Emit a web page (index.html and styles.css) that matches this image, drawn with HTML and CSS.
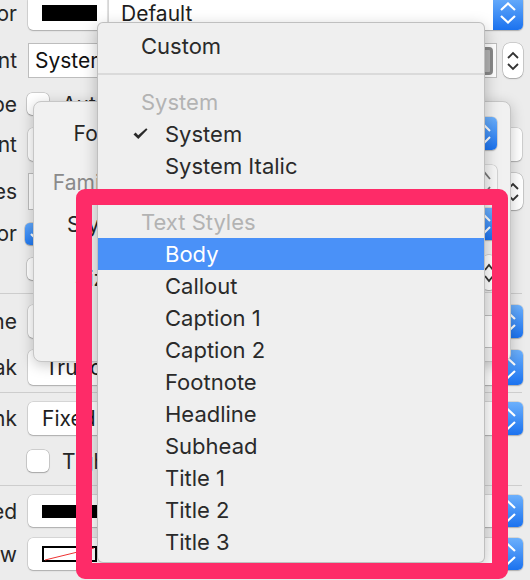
FILE: index.html
```html
<!DOCTYPE html>
<html>
<head>
<meta charset="utf-8">
<link rel="stylesheet" href="styles.css">
</head>
<body>
<div class="inspector">
  <div class="row r1">
    <div class="label"><span>Color</span></div>
    <div class="ctrl">
      <div class="well"><span class="swatch black"></span></div>
      <div class="popup joined"><span class="ptext">Default</span><span class="barrows"><svg width="16" height="22" viewBox="0 0 16 22"><path d="M1 8 L8 1.5 L15 8 M1 14 L8 20.5 L15 14" fill="none" stroke="#fff" stroke-width="2.2"/></svg></span></div>
    </div>
  </div>
  <div class="row r2">
    <div class="label"><span>Font</span></div>
    <div class="ctrl">
      <div class="field"><span class="ftext">System 17.0</span><span class="fontbtn"></span></div>
      <div class="stepper"><svg width="12" height="22" viewBox="0 0 12 22"><path d="M1 8 L6 3 L11 8 M1 14 L6 19 L11 14" fill="none" stroke="#333" stroke-width="1.8"/></svg></div>
    </div>
  </div>
  <div class="row r3">
    <div class="label"><span>Dynamic Type</span></div>
    <div class="ctrl">
      <span class="cb"></span><span class="cbtext">Automatically Adjusts Font</span>
    </div>
  </div>
  <div class="row r4">
    <div class="label"><span>Alignment</span></div>
    <div class="ctrl"><div class="seg"></div></div>
  </div>
  <div class="row r5">
    <div class="label"><span>Lines</span></div>
    <div class="ctrl">
      <div class="field"><span class="ftext">1</span></div>
      <div class="stepper"><svg width="12" height="22" viewBox="0 0 12 22"><path d="M1 8 L6 3 L11 8 M1 14 L6 19 L11 14" fill="none" stroke="#333" stroke-width="1.8"/></svg></div>
    </div>
  </div>
  <div class="row r6">
    <div class="label"><span>Behavior</span></div>
    <div class="ctrl">
      <span class="cb on"><svg width="14" height="12" viewBox="0 0 14 12"><path d="M2 6 L5.5 9.5 L12 2" fill="none" stroke="#fff" stroke-width="2.2"/></svg></span><span class="cbtext">Enabled</span>
    </div>
  </div>
  <div class="row r7">
    <div class="label"><span></span></div>
    <div class="ctrl">
      <span class="cb"></span><span class="cbtext">Highlighted</span>
    </div>
  </div>
  <div class="sep s1"></div>
  <div class="row r8">
    <div class="label"><span>Baseline</span></div>
    <div class="ctrl">
      <div class="popup"><span class="ptext">Align Baselines</span><span class="barrows"><svg width="16" height="22" viewBox="0 0 16 22"><path d="M1 8 L8 1.5 L15 8 M1 14 L8 20.5 L15 14" fill="none" stroke="#fff" stroke-width="2.2"/></svg></span></div>
    </div>
  </div>
  <div class="row r9">
    <div class="label"><span>Line Break</span></div>
    <div class="ctrl">
      <div class="popup"><span class="ptext tight">Truncate Tail</span><span class="barrows"><svg width="16" height="22" viewBox="0 0 16 22"><path d="M1 8 L8 1.5 L15 8 M1 14 L8 20.5 L15 14" fill="none" stroke="#fff" stroke-width="2.2"/></svg></span></div>
    </div>
  </div>
  <div class="sep s2"></div>
  <div class="row r10">
    <div class="label"><span>Autoshrink</span></div>
    <div class="ctrl">
      <div class="popup"><span class="ptext">Fixed Font Size</span><span class="barrows"><svg width="16" height="22" viewBox="0 0 16 22"><path d="M1 8 L8 1.5 L15 8 M1 14 L8 20.5 L15 14" fill="none" stroke="#fff" stroke-width="2.2"/></svg></span></div>
    </div>
  </div>
  <div class="row r11">
    <div class="label"><span></span></div>
    <div class="ctrl">
      <span class="cb"></span><span class="cbtext">Tighten Letter Spacing</span>
    </div>
  </div>
  <div class="sep s3"></div>
  <div class="row r12">
    <div class="label"><span>Highlighted</span></div>
    <div class="ctrl">
      <div class="well"><span class="swatch black thin"></span></div>
      <div class="popup joined"><span class="ptext">Default</span><span class="barrows"><svg width="16" height="22" viewBox="0 0 16 22"><path d="M1 8 L8 1.5 L15 8 M1 14 L8 20.5 L15 14" fill="none" stroke="#fff" stroke-width="2.2"/></svg></span></div>
    </div>
  </div>
  <div class="row r13">
    <div class="label"><span>Shadow</span></div>
    <div class="ctrl">
      <div class="well"><svg class="noswatch" width="55" height="16" viewBox="0 0 55 16"><rect x="1" y="1" width="53" height="14" fill="#fff" stroke="#000" stroke-width="2"/><path d="M3 14 L52 2" stroke="#e33" stroke-width="1"/></svg></div>
      <div class="popup joined"><span class="ptext">Default</span><span class="barrows"><svg width="16" height="22" viewBox="0 0 16 22"><path d="M1 8 L8 1.5 L15 8 M1 14 L8 20.5 L15 14" fill="none" stroke="#fff" stroke-width="2.2"/></svg></span></div>
    </div>
  </div>
</div>

<div class="popover">
  <div class="prow p1">
    <div class="plabel">Font</div>
    <div class="pctrl"><div class="popup"><span class="ptext">Text Styles</span><span class="barrows small"><svg width="12" height="20" viewBox="0 0 12 20"><path d="M1 7 L6 2 L11 7 M1 13 L6 18 L11 13" fill="none" stroke="#fff" stroke-width="2"/></svg></span></div></div>
  </div>
  <div class="prow p2">
    <div class="plabel dim">Family</div>
    <div class="pctrl"><div class="popup off"><span class="ptext"></span><span class="garrows"><svg width="12" height="26" viewBox="0 0 12 26"><path d="M1 9 L6 3 L11 9 M1 17 L6 23 L11 17" fill="none" stroke="#777" stroke-width="1.8"/></svg></span></div></div>
  </div>
  <div class="prow p3">
    <div class="plabel">Style</div>
    <div class="pctrl"><div class="popup"><span class="ptext">Body</span><span class="barrows small"><svg width="12" height="20" viewBox="0 0 12 20"><path d="M1 7 L6 2 L11 7 M1 13 L6 18 L11 13" fill="none" stroke="#fff" stroke-width="2"/></svg></span></div></div>
  </div>
  <div class="prow p4">
    <div class="plabel">Size</div>
    <div class="pctrl"><div class="field"><span class="ftext">17</span></div><div class="stepper sm"><svg width="10" height="22" viewBox="0 0 10 22"><path d="M1 8 L5 3 L9 8 M1 14 L5 19 L9 14" fill="none" stroke="#333" stroke-width="1.8"/></svg></div></div>
  </div>
  <div class="psep"></div>
  <div class="prow p5">
    <div class="plabel"></div>
    <div class="pctrl"><div class="field"></div></div>
  </div>
</div>

<div class="menu">
  <div class="mi head dark">Custom</div>
  <div class="msep"></div>
  <div class="mi head">System</div>
  <div class="mi"><svg class="check" width="15" height="12" viewBox="0 0 15 12"><path d="M0.5 6.5 L2.6 4.6 L5.2 7.3 L13.2 0.3 L14.5 1.6 L5.3 11 Z" fill="#2a2a2a"/></svg>System</div>
  <div class="mi">System Italic</div>
  <div class="msep"></div>
  <div class="mi head">Text Styles</div>
  <div class="mi sel">Body</div>
  <div class="mi">Callout</div>
  <div class="mi">Caption 1</div>
  <div class="mi">Caption 2</div>
  <div class="mi">Footnote</div>
  <div class="mi">Headline</div>
  <div class="mi">Subhead</div>
  <div class="mi">Title 1</div>
  <div class="mi">Title 2</div>
  <div class="mi">Title 3</div>
</div>

<div class="callout"></div>
</body>
</html>
```

FILE: styles.css
```css
html, body {
  margin: 0;
  width: 530px;
  height: 580px;
  overflow: hidden;
  background: #ececec;
}
body {
  display: flow-root;
  position: relative;
  font-family: Inter, "Noto Sans", sans-serif;
  font-size: 21px;
  color: #262626;
}

/* ---------- background inspector ---------- */
.inspector {
  width: 523px;
  margin-top: -4px;
  display: flex;
  flex-direction: column;
}
.row {
  display: flex;
  align-items: center;
  flex-shrink: 0;
}
.label {
  width: 17px;
  flex-shrink: 0;
  overflow: hidden;
  display: flex;
  justify-content: flex-end;
  white-space: nowrap;
}
.ctrl {
  margin-left: 11px;
  flex: 1;
  align-self: stretch;
  display: flex;
  align-items: center;
  min-width: 0;
}
.r1 { height: 34px; }
.r2 { height: 35px; margin-top: 13px; }
.r3 { height: 22px; margin-top: 15px; }
.r4 { height: 33px; margin-top: 13px; }
.r5 { height: 37px; margin-top: 12px; }
.r6 { height: 23px; margin-top: 12px; }
.r7 { height: 22px; margin-top: 13px; }
.r8 { height: 33px; margin-top: 11px; }
.r9 { height: 35px; margin-top: 12px; }
.r10 { height: 33px; margin-top: 9px; }
.r11 { height: 22px; margin-top: 15px; }
.r12 { height: 32px; margin-top: 9px; }
.r13 { height: 32px; margin-top: 11px; }

.sep {
  height: 1px;
  background: #cdcdcd;
  width: 522px;
  flex-shrink: 0;
}
.s1 { margin-top: 13px; }
.s2 { margin-top: 7px; }
.s3 { margin-top: 13px; }

.well {
  width: 80px;
  align-self: stretch;
  box-sizing: border-box;
  background: #fff;
  border-radius: 5px 0 0 5px;
  display: flex;
  align-items: center;
  padding-left: 14px;
  box-shadow: 0 0 0 0.5px rgba(0,0,0,0.18), 0 1px 1.5px rgba(0,0,0,0.2);
}
.swatch {
  width: 55px;
  height: 16px;
}
.swatch.black { background: #000; }
.swatch.thin { height: 13px; }

.popup {
  flex: 1;
  align-self: stretch;
  min-width: 0;
  background: #fff;
  border-radius: 5px;
  display: flex;
  align-items: center;
  box-shadow: 0 0 0 0.5px rgba(0,0,0,0.18), 0 1px 1.5px rgba(0,0,0,0.2);
}
.popup.joined {
  border-radius: 0 5px 5px 0;
  border-left: 1px solid #d6d6d6;
}
.popup.off {
  background: #f7f7f7;
}
.ptext {
  flex: 1;
  padding-left: 12px;
  white-space: nowrap;
  overflow: hidden;
  color: #1e1e1e;
}
.ptext.tight { padding-left: 17px; }
.r10 .ptext { padding-left: 14px; }
.barrows {
  width: 30px;
  align-self: stretch;
  flex-shrink: 0;
  background: linear-gradient(#6cb0fc, #1b72ef);
  border-radius: 0 5px 5px 0;
  display: flex;
  align-items: center;
  justify-content: center;
}
.barrows.small { width: 24px; }
.garrows {
  width: 24px;
  display: flex;
  align-items: center;
  justify-content: center;
}

.field {
  flex: 1;
  align-self: stretch;
  min-width: 0;
  background: #fff;
  border: 1px solid #bdbdbd;
  display: flex;
  align-items: center;
  padding-left: 6px;
  white-space: nowrap;
  overflow: hidden;
}
.ftext { flex: 1; color: #111; }
.fontbtn {
  width: 9px;
  height: 22px;
  margin-right: 3px;
  border: 3px solid #8a8a8a;
  border-radius: 4px;
  background: #b3b3b3;
  flex-shrink: 0;
}
.stepper {
  width: 20px;
  align-self: stretch;
  margin-left: 6px;
  background: #fff;
  border-radius: 7px;
  box-shadow: 0 0 0 0.5px rgba(0,0,0,0.25), 0 1px 1.5px rgba(0,0,0,0.2);
  display: flex;
  align-items: center;
  justify-content: center;
  flex-shrink: 0;
}
.stepper.sm { width: 16px; margin-left: 3px; }

.seg {
  flex: 1;
  align-self: stretch;
  background: #fff;
  border-radius: 5px;
  margin-right: 1px;
  box-shadow: 0 0 0 0.5px rgba(0,0,0,0.18), 0 1px 1.5px rgba(0,0,0,0.2);
}

.cb {
  width: 22px;
  height: 22px;
  box-sizing: border-box;
  flex-shrink: 0;
  margin-left: -1px;
  background: #fff;
  border-radius: 5px;
  box-shadow: 0 0 0 0.5px rgba(0,0,0,0.25), 0 1px 1.5px rgba(0,0,0,0.2);
  display: flex;
  align-items: center;
  justify-content: center;
}
.cb.on {
  background: linear-gradient(#5ea6fb, #2179f0);
  margin-left: -3px;
}
.cbtext {
  margin-left: 13px;
  white-space: nowrap;
}

/* ---------- font popover ---------- */
.popover {
  position: absolute;
  left: 33px;
  top: 101px;
  width: 478px;
  height: 261px;
  box-sizing: border-box;
  background: #f1f1f1;
  border: 1px solid #c6c6c6;
  border-radius: 8px;
  box-shadow: 0 3px 14px rgba(0,0,0,0.22);
  display: flex;
  flex-direction: column;
}
.prow {
  display: flex;
  align-items: center;
  padding-right: 13px;
  flex-shrink: 0;
}
.plabel {
  width: 83px;
  flex-shrink: 0;
  text-align: right;
  white-space: nowrap;
  color: #262626;
}
.plabel.dim { color: #8a8a8a; }
.pctrl {
  margin-left: 12px;
  flex: 1;
  align-self: stretch;
  display: flex;
}
.p1 { margin-top: 15px; height: 33px; }
.p2 { margin-top: 15px; height: 35px; }
.p3 { margin-top: 8px; height: 32px; }
.p4 { margin-top: 15px; height: 35px; }
.p4 .plabel { padding-top: 12px; }
.psep {
  margin: 2px 13px 0 95px;
  height: 1px;
  background: #cfcfcf;
}
.p5 { margin-top: 22px; height: 33px; }

/* ---------- dropdown menu ---------- */
.menu {
  position: absolute;
  left: 97px;
  top: 22px;
  width: 388px;
  height: 541px;
  box-sizing: border-box;
  padding-top: 7px;
  background: #efefef;
  border: 1px solid rgba(0,0,0,0.2);
  border-radius: 6px;
  box-shadow: 0 5px 16px rgba(0,0,0,0.25);
  font-size: 22px;
  color: #2a2a2a;
}
.mi {
  position: relative;
  height: 32px;
  display: flex;
  align-items: center;
  padding-left: 67px;
  white-space: nowrap;
}
.mi.head {
  padding-left: 43px;
  color: #b3b3b3;
}
.mi.head.dark { color: #2a2a2a; }
.mi.sel {
  background: #4a91f8;
  color: #fff;
}
.msep {
  height: 24px;
  display: flex;
  align-items: center;
}
.msep::before {
  content: "";
  flex: 1;
  height: 2px;
  background: #dadada;
}
.check {
  position: absolute;
  left: 35px;
  top: 10px;
}

/* ---------- annotation ---------- */
.callout {
  position: absolute;
  left: 76px;
  top: 189px;
  width: 432px;
  height: 390px;
  box-sizing: border-box;
  border: 16px solid #fe2b68;
  border-radius: 9px;
}
```
